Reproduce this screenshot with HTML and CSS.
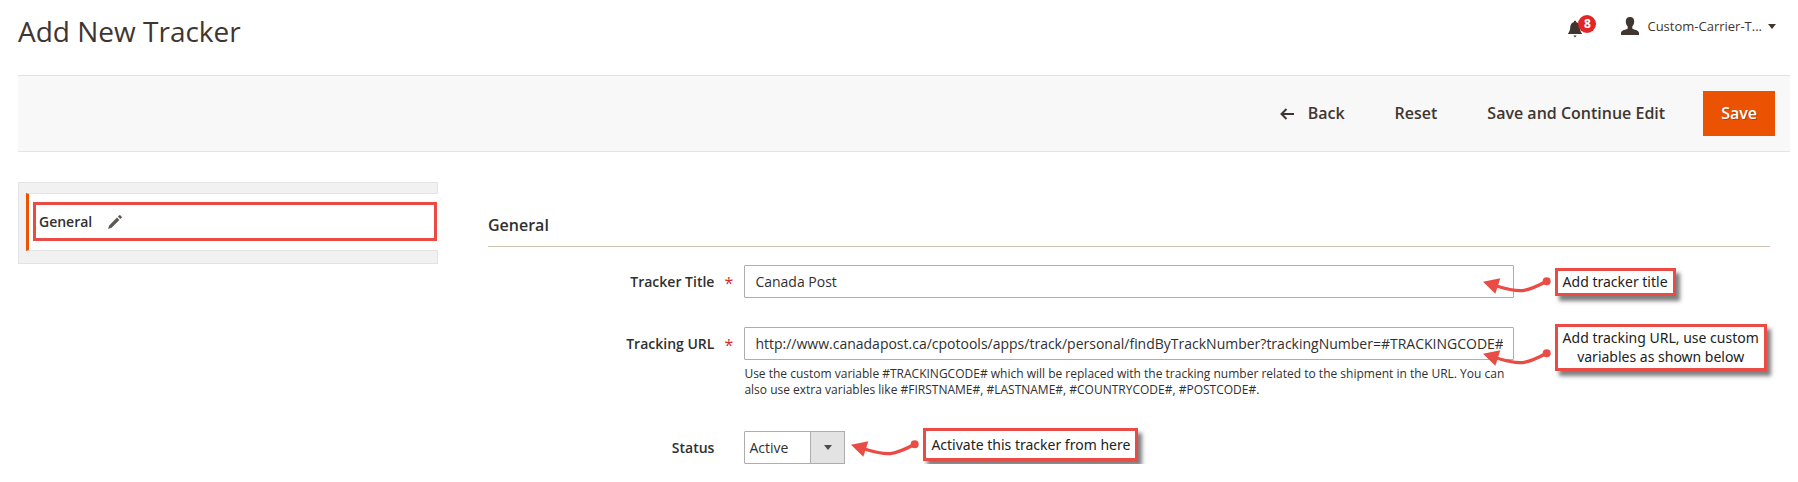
FILE: index.html
```
<!DOCTYPE html>
<html lang="en">
<head>
<meta charset="utf-8">
<title>Add New Tracker</title>
<link rel="stylesheet" href="styles.css">
</head>
<body>
<svg class="defs" aria-hidden="true">
  <symbol id="arrow" viewBox="0 0 204 60">
    <path d="M40 27C110 48 128 47 191 13" fill="none" stroke="#ea4b45" stroke-width="10"/>
    <path d="M0 14 52 4 37 50Z" fill="#ea4b45"/>
    <circle cx="191" cy="13" r="12" fill="#ea4b45"/>
  </symbol>
</svg>

<header class="page-header">
  <h1 class="page-title">Add New Tracker</h1>
  <div class="header-tools">
    <button class="notifications" type="button" aria-label="Notifications">
      <svg class="bell" viewBox="0 0 16 18" aria-hidden="true"><path d="M7 1.2C7 .6 9 .6 9 1.2V2c2.600.8 3.600 2.800 3.800 5.500.2 3 .8 4.200 2.400 6.500H.8c1.600-2.300 2.200-3.500 2.400-6.500C3.400 4.800 4.400 2.800 7 2ZM6.400 15.500h3.200L8 17.500Z" fill="#41362f"/></svg>
      <span class="badge">8</span>
    </button>
    <button class="account" type="button">
      <svg class="avatar" viewBox="0 0 18 18" aria-hidden="true"><path d="M9 0c3 0 4.300 1.900 4.200 4.600C13.100 7 12.300 8.500 11.300 9.600v2c1 1.200 6.700 1.500 6.700 4.400v2H0v-2c0-2.900 5.700-3.200 6.700-4.400v-2C5.700 8.500 4.900 7 4.800 4.600 4.700 1.900 6 0 9 0Z" fill="#41362f"/></svg>
      <span>Custom-Carrier-T...</span>
      <svg class="caret" viewBox="0 0 8 5" aria-hidden="true"><path d="M0 0h8L4 5Z" fill="#41362f"/></svg>
    </button>
  </div>
</header>

<div class="toolbar">
  <button class="action" type="button">
    <svg class="back-icon" viewBox="0 0 14 12" aria-hidden="true"><path d="M14 6H1.500M6.500 1l-5 5 5 5" fill="none" stroke="#41362f" stroke-width="2"/></svg>
    Back
  </button>
  <button class="action" type="button">Reset</button>
  <button class="action" type="button">Save and Continue Edit</button>
  <button class="action primary" type="button">Save</button>
</div>

<div class="columns">
  <nav class="tabs">
    <div class="tab">
      <a class="tab-link" href="#general">General
        <svg class="pencil" viewBox="0 0 14 14" aria-hidden="true"><path d="M0 14 1.200 10.400 9 2.600l2.400 2.400-7.800 7.800ZM9.900 1.700 11.300.3q.5-.5 1 0l1.400 1.400q.5.5 0 1L12.300 4.100Z" fill="#5e5853"/></svg>
      </a>
    </div>
  </nav>

  <main class="content" id="general">
    <h2 class="section-title">General</h2>
    <form class="fields">
      <div class="field">
        <label class="label required" for="title">Tracker Title</label>
        <div class="control">
          <input class="text" id="title" type="text" value="Canada Post">
          <div class="hint">
            <svg class="hint-arrow" aria-hidden="true"><use href="#arrow"/></svg>
            <span class="callout">Add tracker title</span>
          </div>
        </div>
      </div>
      <div class="field">
        <label class="label required" for="url">Tracking URL</label>
        <div class="control">
          <input class="text" id="url" type="text" value="http://www.canadapost.ca/cpotools/apps/track/personal/findByTrackNumber?trackingNumber=#TRACKINGCODE#">
          <p class="note">Use the custom variable #TRACKINGCODE# which will be replaced with the tracking number related to the shipment in the URL. You can also use extra variables like #FIRSTNAME#, #LASTNAME#, #COUNTRYCODE#, #POSTCODE#.</p>
          <div class="hint hint-low">
            <svg class="hint-arrow" aria-hidden="true"><use href="#arrow"/></svg>
            <span class="callout">Add tracking URL, use custom<br>variables as shown below</span>
          </div>
        </div>
      </div>
      <div class="field">
        <label class="label" for="status">Status</label>
        <div class="control control-fit">
          <select class="select" id="status"><option>Active</option><option>Inactive</option></select>
          <span class="select-button"><svg class="caret" viewBox="0 0 8 5" aria-hidden="true"><path d="M0 0h8L4 5Z" fill="#514943"/></svg></span>
          <div class="hint hint-after">
            <svg class="hint-arrow" aria-hidden="true"><use href="#arrow"/></svg>
            <span class="callout callout-tall">Activate this tracker from here</span>
          </div>
        </div>
      </div>
    </form>
  </main>
</div>
</body>
</html>
```
FILE: styles.css
```
* { box-sizing: border-box; }

body {
  margin: 0;
  padding: 0 8px 0 18px;
  background: #fff;
  color: #303030;
  font: 14px/20px "Open Sans", "Noto Sans", sans-serif;
}

button {
  padding: 0;
  border: 0;
  background: none;
  color: inherit;
  font: inherit;
}

svg { display: block; flex: none; }

.defs { position: absolute; width: 0; height: 0; }

.page-header {
  display: flex;
  justify-content: space-between;
  height: 75px;
  padding: 11px 14px 0 0;
}

.page-title {
  margin: 0;
  color: #41362f;
  font-size: 28px;
  font-weight: 400;
  line-height: 40px;
}

.header-tools {
  display: flex;
  align-items: flex-start;
  gap: 38px;
  padding-top: 5px;
}

.notifications { position: relative; padding-top: 4px; }
.bell { width: 16px; height: 18px; }

.badge {
  position: absolute;
  top: -1px;
  left: 11px;
  width: 18px;
  height: 18px;
  border-radius: 50%;
  background: #e22626;
  color: #fff;
  font-size: 12px;
  font-weight: 700;
  line-height: 18px;
  text-align: center;
}

.account {
  display: flex;
  align-items: center;
  color: #41362f;
  font-size: 13px;
}

.avatar { width: 18px; height: 18px; margin-right: 8px; }
.caret { width: 8px; height: 5px; }
.account .caret { margin-left: 6px; }

.toolbar {
  display: flex;
  align-items: center;
  justify-content: flex-end;
  gap: 50px;
  padding: 15px;
  border: solid #e3e3e3;
  border-width: 1px 0;
  background: #f8f8f8;
}

.action {
  display: flex;
  align-items: center;
  color: #41362f;
  font-size: 16px;
  font-weight: 600;
  line-height: 45px;
}

.back-icon { width: 14px; height: 12px; margin-right: 14px; }

.primary {
  margin-left: -12px;
  padding: 0 18px;
  background: #eb5202;
  color: #fff;
  text-shadow: 1px 1px 0 rgba(0, 0, 0, .25);
}

.columns {
  display: grid;
  grid-template-columns: 420px 1fr;
  gap: 50px;
  padding: 30px 20px 0 0;
}

.tabs {
  align-self: start;
  padding: 10px 0 12px 7px;
  border: 1px solid #e3e3e3;
  background: #f1f1f1;
}

.tab {
  margin-right: -1px;
  padding: 8px 1px 9px 4px;
  border: solid #e3e3e3;
  border-width: 1px 0;
  border-left: 3px solid #eb5202;
  background: #fff;
}

.tab-link {
  display: flex;
  align-items: center;
  gap: 16px;
  height: 39px;
  padding: 0 3px;
  border: 3px solid #ea4b45;
  color: #303030;
  font-weight: 600;
  text-decoration: none;
}

.pencil { width: 14px; height: 14px; }

.section-title {
  margin: 0;
  padding: 31px 0 9px;
  border-bottom: 1px solid #cac3b4;
  font-size: 16px;
  font-weight: 600;
  line-height: 24px;
}

.fields {
  display: grid;
  gap: 29px;
  padding-top: 18px;
}

.field {
  display: grid;
  grid-template-columns: 20% 60%;
  align-items: start;
}

.label {
  position: relative;
  padding-right: 30px;
  font-weight: 600;
  line-height: 33px;
  text-align: right;
}

.required::after {
  position: absolute;
  top: 2px;
  right: 11px;
  color: #e22626;
  content: "*";
  font-size: 16px;
  font-weight: 400;
}

.control { position: relative; }
.control-fit { width: 101px; }

.text,
.select {
  display: block;
  width: 100%;
  height: 33px;
  margin: 0;
  padding: 0 10px;
  border: 1px solid #adadad;
  border-radius: 1px;
  background: #fff;
  color: #303030;
  font: inherit;
}

.select { padding: 0 4px; appearance: none; }

.select-button {
  position: absolute;
  top: 0;
  right: 0;
  display: grid;
  place-items: center;
  width: 35px;
  height: 33px;
  border: 1px solid #adadad;
  background: #e3e3e3;
  pointer-events: none;
}

.note {
  margin: 6px 0 4px;
  font-size: 12px;
  line-height: 16px;
}

.hint {
  position: absolute;
  top: 2px;
  left: calc(100% - 31px);
  display: flex;
  align-items: center;
  gap: 4px;
}

.hint-low { top: -3px; }
.hint-after { top: -3px; left: calc(100% + 6px); }

.hint-arrow { width: 68px; height: 20px; margin-top: 10px; }
.hint-low .hint-arrow { margin-top: 22px; }

.callout {
  padding: 1px 5px 2px;
  border: 3px solid #ea4b45;
  background: #fff;
  box-shadow: 4px 5px 4px rgba(0, 0, 0, .5);
  color: #222;
  font: 14px/19px "Noto Sans", "Open Sans", sans-serif;
  text-align: center;
  white-space: nowrap;
}

.callout-tall { padding: 4px 5px; }
```
